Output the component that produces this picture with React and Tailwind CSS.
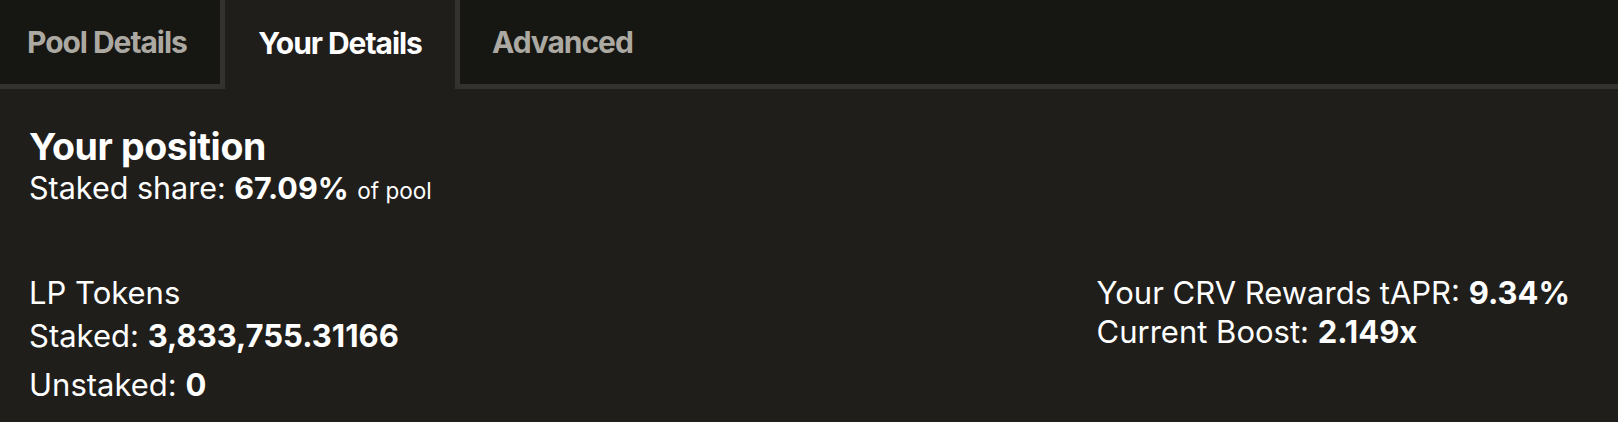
import React from 'react';

const font = { fontFamily: 'Inter, "Liberation Sans", sans-serif' };

function Tab({ label, active, last }) {
  if (active) {
    return (
      <div className="flex h-[89px] w-[230px] items-center justify-center bg-[#1f1e1b] pb-[2px] text-[30px] font-bold tracking-[-0.035em] text-white">
        {label}
      </div>
    );
  }
  return (
    <div
      className={
        'flex h-[89px] items-center border-b-[5px] border-[#33322f] bg-[#161613] text-[30px] font-bold tracking-[-0.035em] text-[#aca9a2] ' +
        (last ? 'flex-1 border-l-[5px] pl-[32px]' : 'w-[225px] border-r-[5px] pl-[27px]')
      }
    >
      {label}
    </div>
  );
}

export default function App() {
  return (
    <div className="min-h-screen w-full bg-[#1f1e1b] text-white" style={font}>
      <div className="flex">
        <Tab label="Pool Details" />
        <Tab label="Your Details" active />
        <Tab label="Advanced" last />
      </div>

      <div className="px-[29px] pt-[38px]">
        <h2 className="text-[37.5px] font-bold leading-[40px] tracking-[-0.01em]">Your position</h2>
        <p className="text-[30.5px] leading-[42px]">
          Staked share: <strong className="font-bold">67.09%</strong>{' '}
          <span className="text-[22.5px]">of pool</span>
        </p>

        <div className="mt-[63px] flex justify-between pr-[19px]">
          <div className="flex flex-col text-[31px]">
            <span className="leading-[36px]">LP Tokens</span>
            <span className="leading-[50px]">
              Staked: <strong className="font-bold">3,833,755.31166</strong>
            </span>
            <span className="leading-[48px]">
              Unstaked: <strong className="font-bold">0</strong>
            </span>
          </div>
          <div className="flex flex-col text-[31px]">
            <span className="leading-[36px]">
              Your CRV Rewards tAPR: <strong className="font-bold">9.34%</strong>
            </span>
            <span className="leading-[42px]">
              Current Boost: <strong className="font-bold">2.149x</strong>
            </span>
          </div>
        </div>
      </div>
    </div>
  );
}
